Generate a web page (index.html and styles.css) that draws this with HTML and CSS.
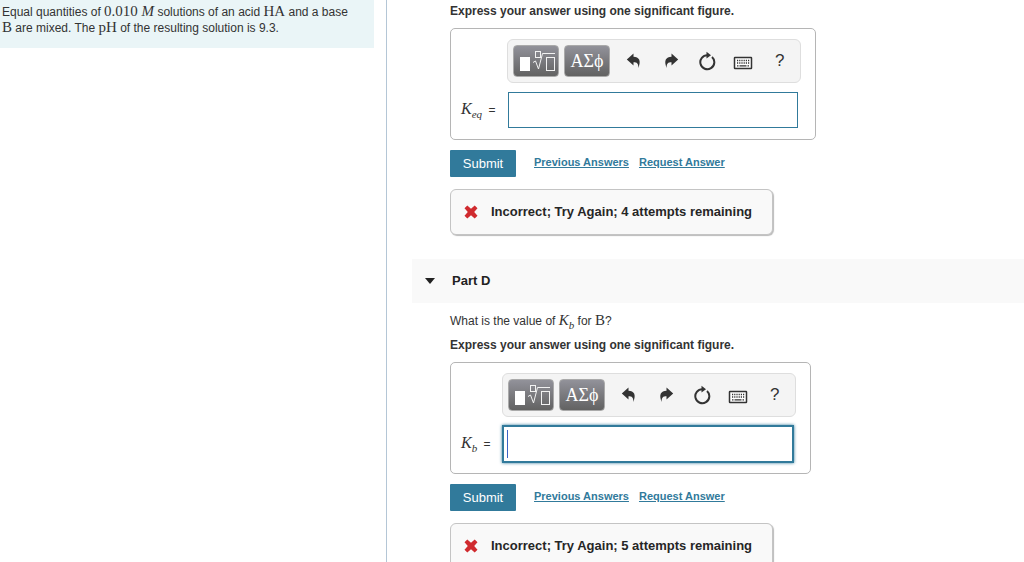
FILE: index.html
```html
<!DOCTYPE html>
<html lang="en">
<head>
<meta charset="utf-8">
<title>Acid and base equilibrium</title>
<link rel="stylesheet" href="styles.css">
</head>
<body>
<svg class="sprite" aria-hidden="true">
  <symbol id="template" viewBox="0 0 40 26">
    <rect x="4" y="9" width="10" height="14" fill="#fff"/>
    <g fill="none" stroke="#f2f2f2">
      <rect x="19.500" y="3.500" width="5" height="6"/>
      <path d="M17 14.500l2.500-1.500 3 8 4-15.500H39"/>
      <rect x="30.500" y="9.500" width="8" height="13"/>
    </g>
  </symbol>
  <symbol id="undo" viewBox="0 0 16 16">
    <path d="M.8 6.500 7.500.500v3.300C13 4 15.500 7.500 12.300 15 12.600 10.500 11 9.300 7.500 9.300v3.200z" fill="#333"/>
  </symbol>
  <symbol id="redo" viewBox="0 0 16 16">
    <path d="M15.200 6.500 8.500.500v3.300C3 4 .5 7.500 3.700 15 3.400 10.500 5 9.300 8.500 9.300v3.200z" fill="#333"/>
  </symbol>
  <symbol id="reset" viewBox="0 0 18 20">
    <path d="M14 6A7 7 0 1 1 9.500 4.200" fill="none" stroke="#333" stroke-width="2"/>
    <path d="M8.500.800 13 4.200 8.500 7.600z" fill="#333"/>
  </symbol>
  <symbol id="keyboard" viewBox="0 0 20 14">
    <rect x="1.500" y="1.500" width="17" height="11" rx=".5" fill="#fff" stroke="#333" stroke-width="1.500"/>
    <path d="M4 4.500h13M4 7h13" stroke="#333" stroke-width="1.300" stroke-dasharray="1.200 1"/>
    <path d="M4 9.800h1.500M6.500 9.800h7M14.500 9.800H16" stroke="#333" stroke-width="1.300"/>
  </symbol>
  <symbol id="cross" viewBox="0 0 14 14">
    <path d="M.5 3.300 3.300.500 7 3.800 10.700.500 13.500 3.300 10.200 7 13.500 10.700 10.700 13.500 7 10.200 3.300 13.500.500 10.700 3.800 7z" fill="#d02b2f"/>
  </symbol>
</svg>
<div class="page">
  <aside class="sidebar">
    <p class="prompt">Equal quantities of <span class="math">0.010 <i>M</i></span> solutions of an acid <span class="math">HA</span> and a base <span class="math">B</span> are mixed. The <span class="math">pH</span> of the resulting solution is 9.3.</p>
  </aside>
  <main class="content">
    <section class="part part-c">
      <p class="instruction">Express your answer using one significant figure.</p>
      <form class="answer">
        <label class="variable" for="keq"><span class="symbol">K<sub>eq</sub></span> =</label>
        <div class="editor">
          <div class="toolbar">
            <button class="tool" type="button" aria-label="Templates"><svg class="template-icon"><use href="#template"/></svg></button>
            <button class="tool greek" type="button">ΑΣϕ</button>
            <div class="actions">
              <button class="action" type="button" aria-label="Undo"><svg class="arrow-icon"><use href="#undo"/></svg></button>
              <button class="action" type="button" aria-label="Redo"><svg class="arrow-icon"><use href="#redo"/></svg></button>
              <button class="action" type="button" aria-label="Reset"><svg class="reset-icon"><use href="#reset"/></svg></button>
              <button class="action" type="button" aria-label="Keyboard"><svg class="keyboard-icon"><use href="#keyboard"/></svg></button>
              <button class="action" type="button">?</button>
            </div>
          </div>
          <div class="field"><input class="input" id="keq" type="text"></div>
        </div>
      </form>
      <div class="controls">
        <button class="submit" type="button">Submit</button>
        <a class="link" href="#previous">Previous Answers</a>
        <a class="link" href="#request">Request Answer</a>
      </div>
      <div class="feedback"><svg class="cross-icon"><use href="#cross"/></svg>Incorrect; Try Again; 4 attempts remaining</div>
    </section>
    <h2 class="part-header"><span class="triangle"></span>Part D</h2>
    <section class="part part-d">
      <p class="question">What is the value of <span class="math"><i>K<sub>b</sub></i></span> for <span class="math">B</span>?</p>
      <p class="instruction">Express your answer using one significant figure.</p>
      <form class="answer">
        <label class="variable" for="kb"><span class="symbol">K<sub>b</sub></span> =</label>
        <div class="editor">
          <div class="toolbar">
            <button class="tool" type="button" aria-label="Templates"><svg class="template-icon"><use href="#template"/></svg></button>
            <button class="tool greek" type="button">ΑΣϕ</button>
            <div class="actions">
              <button class="action" type="button" aria-label="Undo"><svg class="arrow-icon"><use href="#undo"/></svg></button>
              <button class="action" type="button" aria-label="Redo"><svg class="arrow-icon"><use href="#redo"/></svg></button>
              <button class="action" type="button" aria-label="Reset"><svg class="reset-icon"><use href="#reset"/></svg></button>
              <button class="action" type="button" aria-label="Keyboard"><svg class="keyboard-icon"><use href="#keyboard"/></svg></button>
              <button class="action" type="button">?</button>
            </div>
          </div>
          <div class="field"><input class="input active" id="kb" type="text"><span class="caret"></span></div>
        </div>
      </form>
      <div class="controls">
        <button class="submit" type="button">Submit</button>
        <a class="link" href="#previous">Previous Answers</a>
        <a class="link" href="#request">Request Answer</a>
      </div>
      <div class="feedback"><svg class="cross-icon"><use href="#cross"/></svg>Incorrect; Try Again; 5 attempts remaining</div>
    </section>
  </main>
</div>
</body>
</html>
```
FILE: styles.css
```css
* { box-sizing: border-box; }
body {
  margin: 0;
  background: #fff;
  color: #333;
  font: 12px/16px "Liberation Sans", Arial, sans-serif;
}
p, h2 { margin: 0; }
button { font-family: inherit; padding: 0; border: 0; cursor: pointer; }
svg { display: block; }
.sprite { display: none; }
.page { display: flex; height: 100vh; overflow: hidden; }
.sidebar {
  flex: 0 0 387px;
  padding-right: 12px;
  border-right: 1px solid #b4c6d6;
}
.prompt { padding: 4px 16px 12px 2px; background: #eaf5f7; }
.math {
  font-family: "Liberation Serif", "Times New Roman", serif;
  font-size: 15px;
  line-height: 1px;
}
sub { font-size: 11px; line-height: 1px; vertical-align: -4px; }
.content { flex: 1; min-width: 0; padding-left: 25px; }
.part { padding-left: 38px; }
.part-c { padding-top: 3px; }
.part-d { padding-top: 10px; }
.question { margin-bottom: 8px; }
.instruction { font-weight: bold; margin-bottom: 9px; }
.answer {
  display: flex;
  gap: 11px;
  width: fit-content;
  padding: 10px 14px 11px 10px;
  border: 1px solid #b5b5b5;
  border-radius: 5px;
}
.variable { align-self: flex-end; padding-bottom: 10px; white-space: nowrap; }
.symbol { padding-right: 3px; font: italic 16px/16px "Liberation Serif", "Times New Roman", serif; }
.part-c .variable { min-width: 35px; }
.part-d .variable { min-width: 30px; }
.editor { display: grid; gap: 9px; width: 294px; }
.toolbar {
  display: flex;
  align-items: center;
  gap: 5px;
  height: 44px;
  padding: 0 2px 0 5px;
  background: #f4f4f4;
  border: 1px solid #dedede;
  border-radius: 6px;
}
.tool {
  display: grid;
  place-items: center;
  width: 46px;
  height: 32px;
  border: 1px solid #aaa;
  border-radius: 4px;
  background: linear-gradient(#92929a, #626262);
  color: #fff;
}
.greek { font: 18px/24px "Liberation Serif", "Times New Roman", serif; }
.actions { display: flex; flex: 1; padding-left: 1px; }
.action {
  flex: 1;
  display: grid;
  place-items: center;
  height: 32px;
  background: none;
  color: #333;
  font-size: 17px;
}
.template-icon { width: 40px; height: 26px; }
.arrow-icon { width: 16px; height: 16px; }
.reset-icon { width: 18px; height: 20px; }
.keyboard-icon { width: 20px; height: 14px; margin-top: 3px; }
.field { position: relative; padding: 0 3px 0 1px; }
.input {
  display: block;
  width: 100%;
  height: 36px;
  padding: 0 6px;
  border: 1px solid #317a9b;
  background: #fff;
  font-size: 16px;
}
.input.active { box-shadow: 0 0 0 1px #317a9b, 0 0 3px 1px #317a9b; }
.caret {
  position: absolute;
  left: 5px;
  top: 4px;
  width: 1px;
  height: 28px;
  background: #3a62c4;
}
.controls { display: flex; margin-top: 10px; gap: 10px; }
.submit {
  width: 66px;
  height: 27px;
  margin-right: 8px;
  border-radius: 1px;
  background: #317a9b;
  color: #fff;
  font-size: 13px;
}
.link { margin-top: 4px; color: #317a9b; font-size: 11px; font-weight: bold; }
.feedback {
  display: flex;
  align-items: center;
  gap: 13px;
  width: fit-content;
  height: 46px;
  margin-top: 12px;
  padding: 0 20px 0 13px;
  border: 1px solid #c4c4c4;
  border-radius: 6px;
  box-shadow: 1px 1px 1px #bbb;
  background: #f9f9f9;
  color: #262626;
  font-size: 13px;
  font-weight: bold;
}
.cross-icon { width: 14px; height: 14px; }
.part-header {
  display: flex;
  align-items: center;
  gap: 17px;
  height: 44px;
  margin-top: 24px;
  padding-left: 13px;
  background: #f9f9f9;
  color: #222;
  font-size: 13px;
}
.triangle {
  border: 5px solid transparent;
  border-top: 6px solid #222;
  border-bottom: 0;
}
```
